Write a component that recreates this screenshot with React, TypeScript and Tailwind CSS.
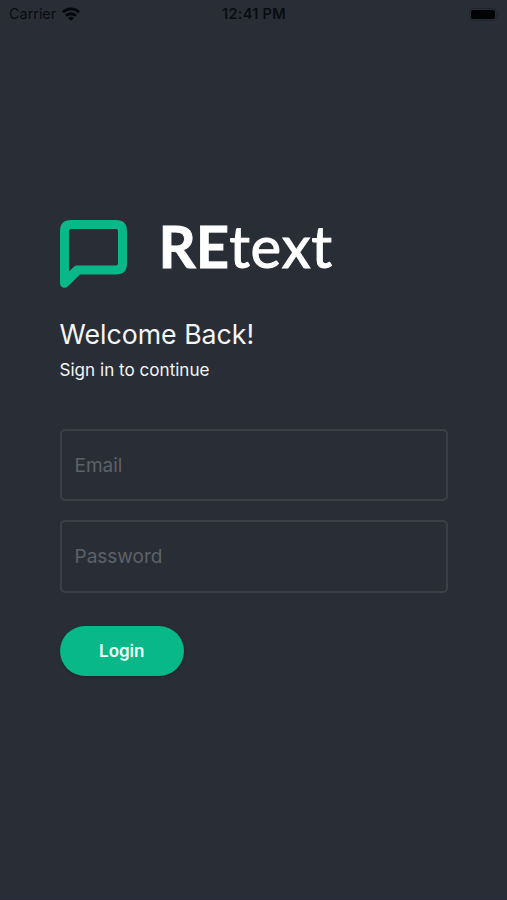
import React, { useState } from 'react';

const StatusBar: React.FC = () => {
  return (
    <div className="flex h-7 items-center justify-between pl-[9px] pr-[8px] text-[14.5px] leading-7 text-[#090b10]">
      <div className="flex w-24 items-center">
        <span className="tracking-[-0.05px]">Carrier</span>
        <svg className="mb-px ml-[6px] h-[14px] w-[18px]" viewBox="0 0 18 14" fill="none" stroke="#05070b" strokeWidth="2.9">
          <path d="M1 5.2a11.3 11.3 0 0 1 16 0" />
          <path d="M4 8.8a7 7 0 0 1 10 0" />
          <path d="M9 13.8L6 10.9a4.2 4.2 0 0 1 6 0z" fill="#05070b" stroke="none" />
        </svg>
      </div>
      <span className="text-[14.5px] font-semibold tracking-[0.3px]">12:41 PM</span>
      <div className="flex w-24 items-center justify-end">
        <div className="flex h-[13px] w-[28px] items-center rounded-[4px] border border-[#20242b] p-px">
          <div className="h-[9px] w-full rounded-[2px] bg-[#020305]" />
        </div>
        <div className="ml-px h-1 w-px bg-[#20242b]" />
      </div>
    </div>
  );
};

const Logo: React.FC = () => {
  return (
    <div className="flex h-[68px] items-start">
      <svg className="h-[68px] w-[67px] shrink-0" viewBox="0 0 67 68">
        <path
          fill="#08b888"
          fillRule="evenodd"
          d="M11 0H56Q67 0 67 11V43.5Q67 54.5 56 54.5H20L7.7 66.6Q5.8 68.3 3.4 67.7Q0 66.8 0 63V11Q0 0 11 0ZM9 11V51.5L14 46.8Q15.3 45.5 17 45.5H56Q58 45.5 58 43.5V11Q58 9 56 9H11Q9 9 9 11Z"
        />
      </svg>
      <div className="-mt-[3px] ml-[32px] flex font-['Lato',sans-serif] text-[58px] leading-[58px] text-white">
        <span className="font-bold [-webkit-text-stroke:0.8px_white]">RE</span>
        <span className="tracking-[0.8px] [-webkit-text-stroke:1px_white]">text</span>
      </div>
    </div>
  );
};

const App: React.FC = () => {
  const [email, setEmail] = useState<string>('');
  const [password, setPassword] = useState<string>('');

  const inputClass =
    'block w-full rounded-[5px] border-[2px] border-[#3b4047] bg-transparent px-[13px] text-[19px] text-white outline-none placeholder:text-[#5d6169]';

  return (
    <div className="flex h-[900px] w-full flex-col border-b border-[#30283a] bg-[#292e36] font-['Inter',sans-serif]">
      <StatusBar />
      <main className="ml-[59.5px] mt-[192px] w-[388.5px]">
        <Logo />
        <h1 className="mt-[26px] text-[26.7px] leading-10 text-[#f4f5f6]">Welcome Back!</h1>
        <p className="mt-[4px] text-[17.1px] leading-6 text-[#f4f5f6]">Sign in to continue</p>
        <form className="mt-[47px]" onSubmit={(e) => e.preventDefault()}>
          <input
            type="email"
            placeholder="Email"
            value={email}
            onChange={(e) => setEmail(e.target.value)}
            className={`h-[72px] ${inputClass}`}
          />
          <input
            type="password"
            placeholder="Password"
            value={password}
            onChange={(e) => setPassword(e.target.value)}
            className={`mt-[19px] h-[73px] ${inputClass}`}
          />
          <button
            type="submit"
            className="mt-[33px] h-[50px] w-[124.5px] rounded-full bg-[#08b888] pt-px text-[17px] font-semibold text-[#f0fffa] shadow-[0_1px_3px_rgba(0,0,0,0.25)]"
          >
            Login
          </button>
        </form>
      </main>
    </div>
  );
};

export default App;
